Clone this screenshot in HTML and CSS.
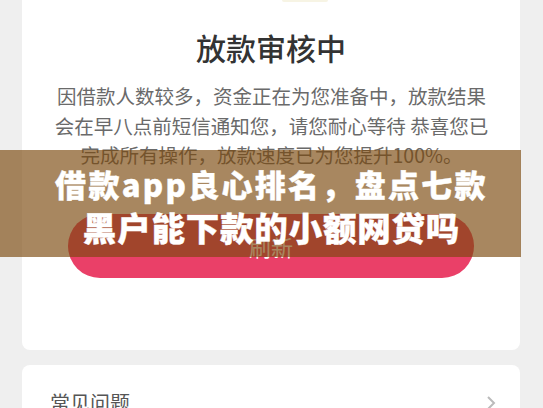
FILE: index.html
```html
<!DOCTYPE html>
<html lang="zh-CN">

<head>
  <meta charset="UTF-8">
  <meta name="viewport" content="width=device-width, initial-scale=1.0">
  <title>放款审核中</title>

  <link rel="stylesheet" href="styles.css">
</head>

<body>
  <div class="page">
    <div class="card status-card">
      <div class="status-icon"></div>
      <h1 class="status-title">放款审核中</h1>
      <p class="status-desc">因借款人数较多，资金正在为您准备中，放款结果会在早八点前短信通知您，请您耐心等待 恭喜您已完成所有操作，放款速度已为您提升100%。</p>
      <button class="btn-refresh">刷新</button>
    </div>

    <div class="card faq-card">
      <span class="faq-label">常见问题</span>
      <svg class="faq-arrow" width="10" height="16" viewBox="0 0 10 16">
        <path d="M2 2 L8 8 L2 14" fill="none" stroke="#bbb" stroke-width="2" />
      </svg>
    </div>
  </div>

  <!-- 文章标题横幅，盖在页面截图上 -->
  <div class="banner">
    <div class="banner-line line-1">借款app良心排名，盘点七款</div>
    <div class="banner-line line-2">黑户能下款的小额网贷吗</div>
  </div>
</body>

</html>
```

FILE: styles.css
```css
body {
  margin: 0;
  background-color: #efefef;
  font-family: "Noto Sans CJK SC", "Noto Sans", sans-serif;
  overflow: hidden;
}

.page {
  width: 498px;
  padding-left: 22px;
}

.card {
  background-color: #FFF;
  border-radius: 8px;
}

.status-card {
  border-radius: 0 0 8px 8px;
  padding-bottom: 72px;
}

.status-icon {
  width: 46px;
  height: 2px;
  margin-left: 260px;
  background-color: #f7f4e4;
  border-radius: 0 0 23px 23px;
}

.status-title {
  margin: 25px 0 0;
  font-size: 30px;
  line-height: 40px;
  font-weight: 500;
  color: #333;
  text-align: center;
}

.status-desc {
  margin: 14px 0 0;
  padding: 0 31px 0 32px;
  font-size: 19.5px;
  line-height: 29.5px;
  color: #6a6a6a;
  text-align: center;
}

.btn-refresh {
  display: block;
  width: 406px;
  height: 64px;
  margin: 44px auto 0;
  border: none;
  border-radius: 32px;
  background-color: #ea4068;
  color: #FFF;
  font-family: inherit;
  font-size: 22px;
}

.faq-card {
  display: flex;
  justify-content: space-between;
  align-items: center;
  margin-top: 15px;
  padding: 24px 24px 40px 28px;
}

.faq-label {
  font-size: 20px;
  line-height: 28px;
  color: #555;
}

.banner {
  position: absolute;
  left: 0;
  top: 150px;
  width: 499px;
  height: 95px;
  padding: 12px 0 0 22px;
  background-color: rgba(122, 72, 12, 0.655);
  color: #FFF;
  font-weight: 900;
  text-align: center;
  -webkit-text-stroke: 0.4px #FFF;
}

.banner-line {
  line-height: 43px;
  white-space: nowrap;
}

.line-1 {
  font-size: 31px;
  letter-spacing: 2.3px;
}

.line-2 {
  font-size: 33.5px;
  letter-spacing: 0.8px;
}
```
